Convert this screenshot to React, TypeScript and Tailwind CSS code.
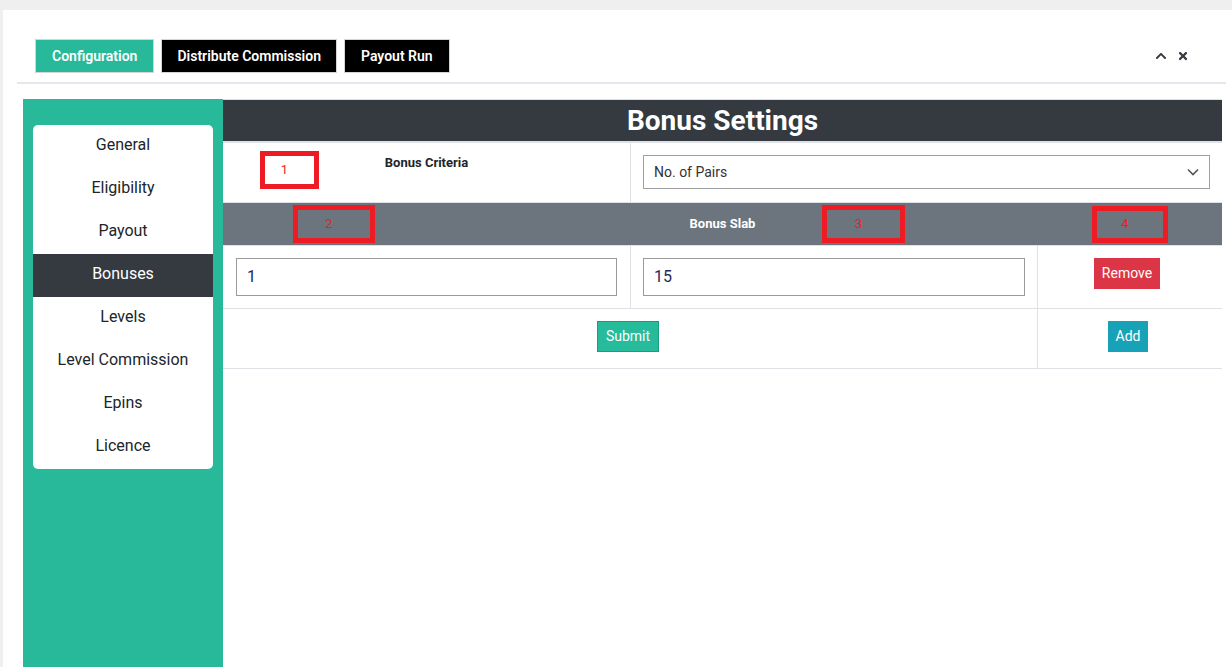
import React from "react";
import { FaChevronUp, FaTimes } from "react-icons/fa";

const MENU = [
  "General",
  "Eligibility",
  "Payout",
  "Bonuses",
  "Levels",
  "Level Commission",
  "Epins",
  "Licence",
];

// red annotation boxes drawn over the table
function Marker({ n, className }: { n: string; className: string }) {
  return (
    <div
      className={
        "absolute border-[5px] border-[#ed1c24] flex items-center justify-center pr-[10px] pb-[2px] text-[13px] font-normal leading-none text-[#ed1c24] " +
        className
      }
    >
      {n}
    </div>
  );
}

export default function App() {
  return (
    <div className="min-h-screen bg-[#efefef] pt-[10px] pl-[3px] font-['Roboto',sans-serif] text-[#212529]">
      <div className="bg-white min-h-[657px] pl-[14px] pr-[6px]">
        {/* top tabs */}
        <div className="flex items-center justify-between pt-[29px] pb-[9px] border-b-2 border-[#e4e8ec]">
          <div className="flex gap-[7px] pl-[18px]">
            <button className="h-[34px] px-[16px] bg-[#27b99a] border border-[#d4d4d4] text-white text-[14px] font-semibold">
              Configuration
            </button>
            <button className="h-[34px] px-[15px] bg-black border border-[#d4d4d4] text-white text-[14px] font-semibold">
              Distribute Commission
            </button>
            <button className="h-[34px] px-[16px] bg-black border border-[#d4d4d4] text-white text-[14px] font-semibold">
              Payout Run
            </button>
          </div>
          <div className="flex items-center gap-[10px] pr-[37px] text-[#343a40]">
            <FaChevronUp className="w-[12px] h-[12px]" />
            <FaTimes className="w-[12px] h-[12px]" />
          </div>
        </div>

        <div className="flex mt-[15px] pl-[6px]">
          {/* side menu */}
          <div className="w-[200px] min-h-[570px] bg-[#27b99a] pt-[26px] px-[10px]">
            <div className="bg-white rounded-[5px] overflow-hidden">
              {MENU.map((m) => (
                <div
                  key={m}
                  className={
                    m === "Bonuses"
                      ? "h-[43px] flex items-center justify-center pb-[4px] text-[16px] bg-[#343a40] text-white"
                      : "h-[43px] flex items-center justify-center pb-[4px] text-[16px] text-[#212529]"
                  }
                >
                  {m}
                </div>
              ))}
            </div>
          </div>

          {/* bonus settings table */}
          <div className="w-[999px] self-start border-t border-[#dee2e6]">
            <div className="h-[41px] bg-[#343a40] flex items-center justify-center text-white text-[28px] font-bold">
              Bonus Settings
            </div>
            <div className="flex h-[61px] border-t-2 border-[#dee2e6]">
              <div className="relative w-[408px] border-r border-[#dee2e6] pt-[11px] text-center text-[13px] font-bold leading-[18px]">
                <Marker n="1" className="left-[37px] top-[8px] w-[59px] h-[38px]" />
                Bonus Criteria
              </div>
              <div className="flex-1 p-[12px] pt-[12px]">
                <div className="h-[34px] border border-[#a0a0a0] flex items-center justify-between pl-[10px] pr-[10px] text-[14px] text-[#333]">
                  <span>No. of Pairs</span>
                  <svg width="12" height="8" viewBox="0 0 12 8" fill="none" stroke="#555" strokeWidth="1.6">
                    <path d="M1 1.5 L6 6.5 L11 1.5" />
                  </svg>
                </div>
              </div>
            </div>
            <div className="relative h-[43px] bg-[#6c757d] border-t border-[#dee2e6] flex items-center justify-center text-white text-[13px] font-bold">
              <Marker n="2" className="left-[70px] top-[2px] w-[82px] h-[38px]" />
              Bonus Slab
              <Marker n="3" className="left-[599px] top-[2px] w-[83px] h-[38px]" />
              <Marker n="4" className="left-[869px] top-[3px] w-[76px] h-[37px]" />
            </div>
            <div className="flex h-[63px] border-t border-[#dee2e6]">
              <div className="w-[408px] border-r border-[#dee2e6] px-[13px] pt-[12px]">
                <div className="h-[38px] border border-[#9a9a9a] flex items-center pl-[10px] text-[16px] text-[#1d2a5b]">
                  1
                </div>
              </div>
              <div className="w-[407px] border-r border-[#dee2e6] px-[12px] pt-[12px]">
                <div className="h-[38px] border border-[#9a9a9a] flex items-center pl-[10px] text-[16px] text-[#1d2a5b]">
                  15
                </div>
              </div>
              <div className="flex-1 flex justify-center pt-[12px] pr-[6px]">
                <button className="h-[31px] px-[8px] bg-[#dc3545] text-white text-[14px]">
                  Remove
                </button>
              </div>
            </div>
            <div className="flex h-[61px] border-t border-b border-[#dee2e6]">
              <div className="w-[815px] border-r border-[#dee2e6] flex justify-center pt-[12px] pr-[4px]">
                <button className="h-[31px] px-[8px] bg-[#26bb9a] border border-[#1a9c7f] text-white text-[14px]">
                  Submit
                </button>
              </div>
              <div className="flex-1 flex justify-center pt-[12px] pr-[4px]">
                <button className="h-[31px] px-[8px] bg-[#17a2b8] text-white text-[14px]">
                  Add
                </button>
              </div>
            </div>
          </div>
        </div>
      </div>
    </div>
  );
}
